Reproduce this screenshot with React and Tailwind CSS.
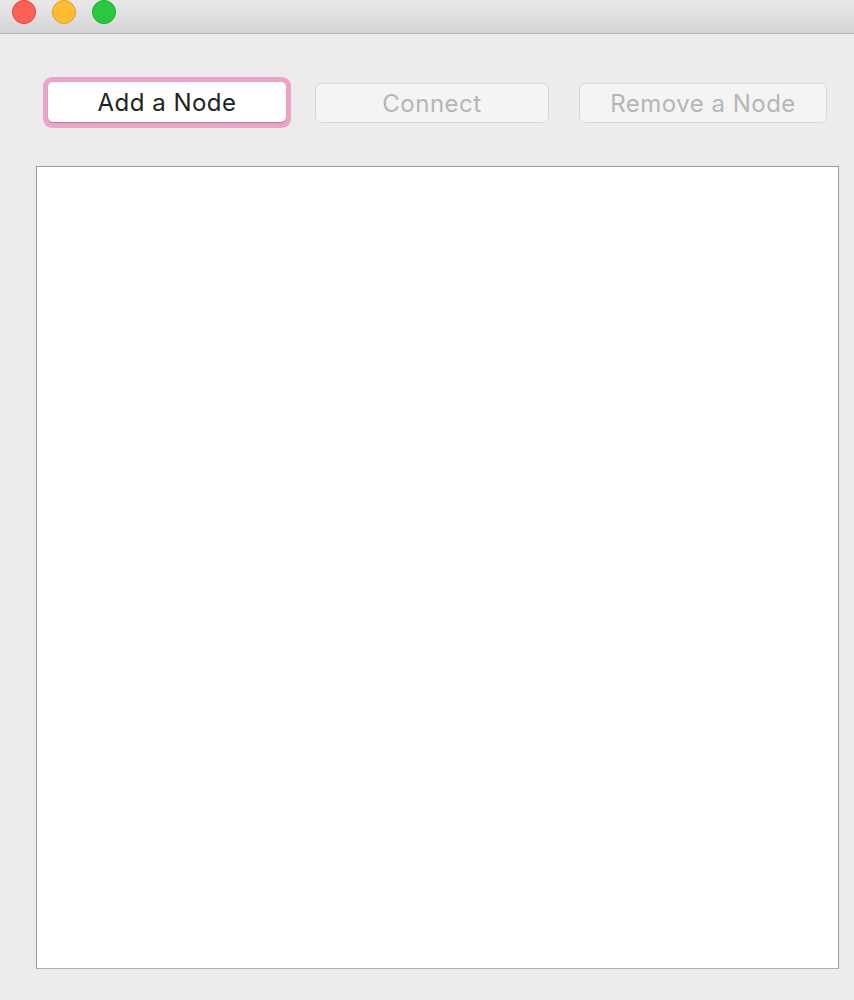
import React from 'react';

const TrafficLight = ({ fill, stroke }) => (
  <div
    className="w-[24px] h-[24px] rounded-full border"
    style={{ backgroundColor: fill, borderColor: stroke }}
  />
);

export default function App() {
  return (
    <div
      className="w-[854px] h-[1000px] bg-[#ececec] flex flex-col overflow-hidden"
      style={{ fontFamily: 'Inter, "Liberation Sans", Arial, sans-serif' }}
    >
      {/* title bar */}
      <div className="h-[34px] shrink-0 bg-gradient-to-b from-[#e9e9e9] to-[#d4d4d4] border-b border-[#b5b5b5] flex items-start gap-[16px] pl-[12px]">
        <TrafficLight fill="#fe5f57" stroke="#e0443e" />
        <TrafficLight fill="#febc2e" stroke="#dea123" />
        <TrafficLight fill="#28c840" stroke="#1aab29" />
      </div>

      {/* toolbar */}
      <div className="flex items-center pt-[43px] pl-[43px] tracking-[0.5px]">
        <div className="rounded-[9px] bg-[#eba5c9] p-[5px] pb-[6px]">
          <button className="w-[238px] h-[40px] pt-[2px] bg-white rounded-[5px] text-[24px] text-[#222] shadow-[0_1px_1px_rgba(0,0,0,0.25)]">
            Add a Node
          </button>
        </div>
        <button className="ml-[24px] w-[234px] h-[40px] pt-[2px] bg-[#f4f4f4] border border-[#d8d8d8] rounded-[6px] text-[24px] text-[#b6b6b6]">
          Connect
        </button>
        <button className="ml-[30px] w-[248px] h-[40px] pt-[2px] bg-[#f4f4f4] border border-[#d8d8d8] rounded-[6px] text-[24px] text-[#b6b6b6]">
          Remove a Node
        </button>
      </div>

      {/* canvas */}
      <div className="mt-[38px] ml-[36px] w-[803px] h-[803px] bg-white border border-[#9a9a9a] border-b-[#b0b0b0]" />
    </div>
  );
}
